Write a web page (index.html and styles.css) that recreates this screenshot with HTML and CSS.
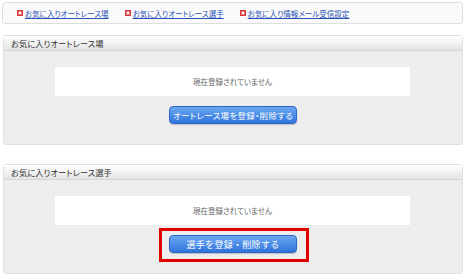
FILE: index.html
```html
<!DOCTYPE html>
<html lang="ja">
<head>
    <meta charset="UTF-8">
    <meta name="viewport" content="width=device-width, initial-scale=1.0">
    <title>お気に入り</title>
    <link rel="stylesheet" href="styles.css">
</head>
<body>
    <div class="nav">
        <a href="#" class="nav-link"><span class="mark"></span>お気に入りオートレース場</a>
        <a href="#" class="nav-link"><span class="mark"></span>お気に入りオートレース選手</a>
        <a href="#" class="nav-link"><span class="mark"></span>お気に入り情報メール受信設定</a>
    </div>

    <div class="section">
        <div class="section-head">お気に入りオートレース場</div>
        <div class="section-body">
            <div class="empty">現在登録されていません</div>
            <div class="action">
                <button class="btn">オートレース場を登録・削除する</button>
            </div>
        </div>
    </div>

    <div class="section second">
        <div class="section-head">お気に入りオートレース選手</div>
        <div class="section-body">
            <div class="empty">現在登録されていません</div>
            <div class="action">
                <button class="btn wide-text">選手を登録・削除する</button>
                <span class="highlight"></span>
            </div>
        </div>
    </div>
</body>
</html>
```

FILE: styles.css
```css
body {
    margin: 0;
    padding: 2px 4px 0 2px;
    background: #fff;
    font-family: "Noto Sans CJK JP", "Noto Sans", sans-serif;
    font-feature-settings: "palt";
    color: #333;
}
.nav {
    height: 20px;
    border: 1px solid #dedede;
    border-radius: 3px;
    background: #fafafa;
    display: flex;
    align-items: center;
    padding-left: 14px;
}
.nav-link {
    display: flex;
    align-items: center;
    font-size: 7.5px;
    color: #2a52b8;
    text-decoration: underline;
    margin-right: 16px;
}
.mark {
    width: 4px;
    height: 4px;
    border: 1px solid #d23a3a;
    background: #fff;
    box-shadow: inset 0 0 0 1px #e57373;
    margin-right: 2px;
}
.section {
    margin: 11px 0 0 1px;
    border: 1px solid #e0e0e0;
    border-radius: 3px;
}
.section.second {
    margin-top: 19px;
}
.section-head {
    height: 14px;
    line-height: 14px;
    padding-left: 7px;
    font-size: 8.3px;
    color: #333;
    background: linear-gradient(#ffffff, #e4e4e4);
    border-bottom: 1px solid #d6d6d6;
}
.section-body {
    background: #ededed;
    padding: 16px 0 20px;
    display: flex;
    flex-direction: column;
    align-items: center;
}
.empty {
    width: 355px;
    height: 29px;
    line-height: 29px;
    background: #fff;
    text-align: center;
    font-size: 7.5px;
    color: #666;
    margin-right: 1px;
}
.action {
    position: relative;
    margin-top: 10px;
}
.btn {
    display: block;
    box-sizing: border-box;
    width: 128px;
    height: 18px;
    padding: 0;
    border: 1px solid #2e67c9;
    border-radius: 4px;
    background: linear-gradient(#6aa7f2, #2f74dc);
    color: #fff;
    font-family: inherit;
    font-feature-settings: "palt";
    font-size: 8.5px;
    letter-spacing: 0.3px;
    box-shadow: 0 1px 1px rgba(0, 0, 0, 0.2);
}
.btn.wide-text {
    font-feature-settings: normal;
    font-size: 9px;
}
.highlight {
    position: absolute;
    left: -10px;
    top: -7px;
    width: 144px;
    height: 28px;
    border: 3px solid #e00000;
}
```
